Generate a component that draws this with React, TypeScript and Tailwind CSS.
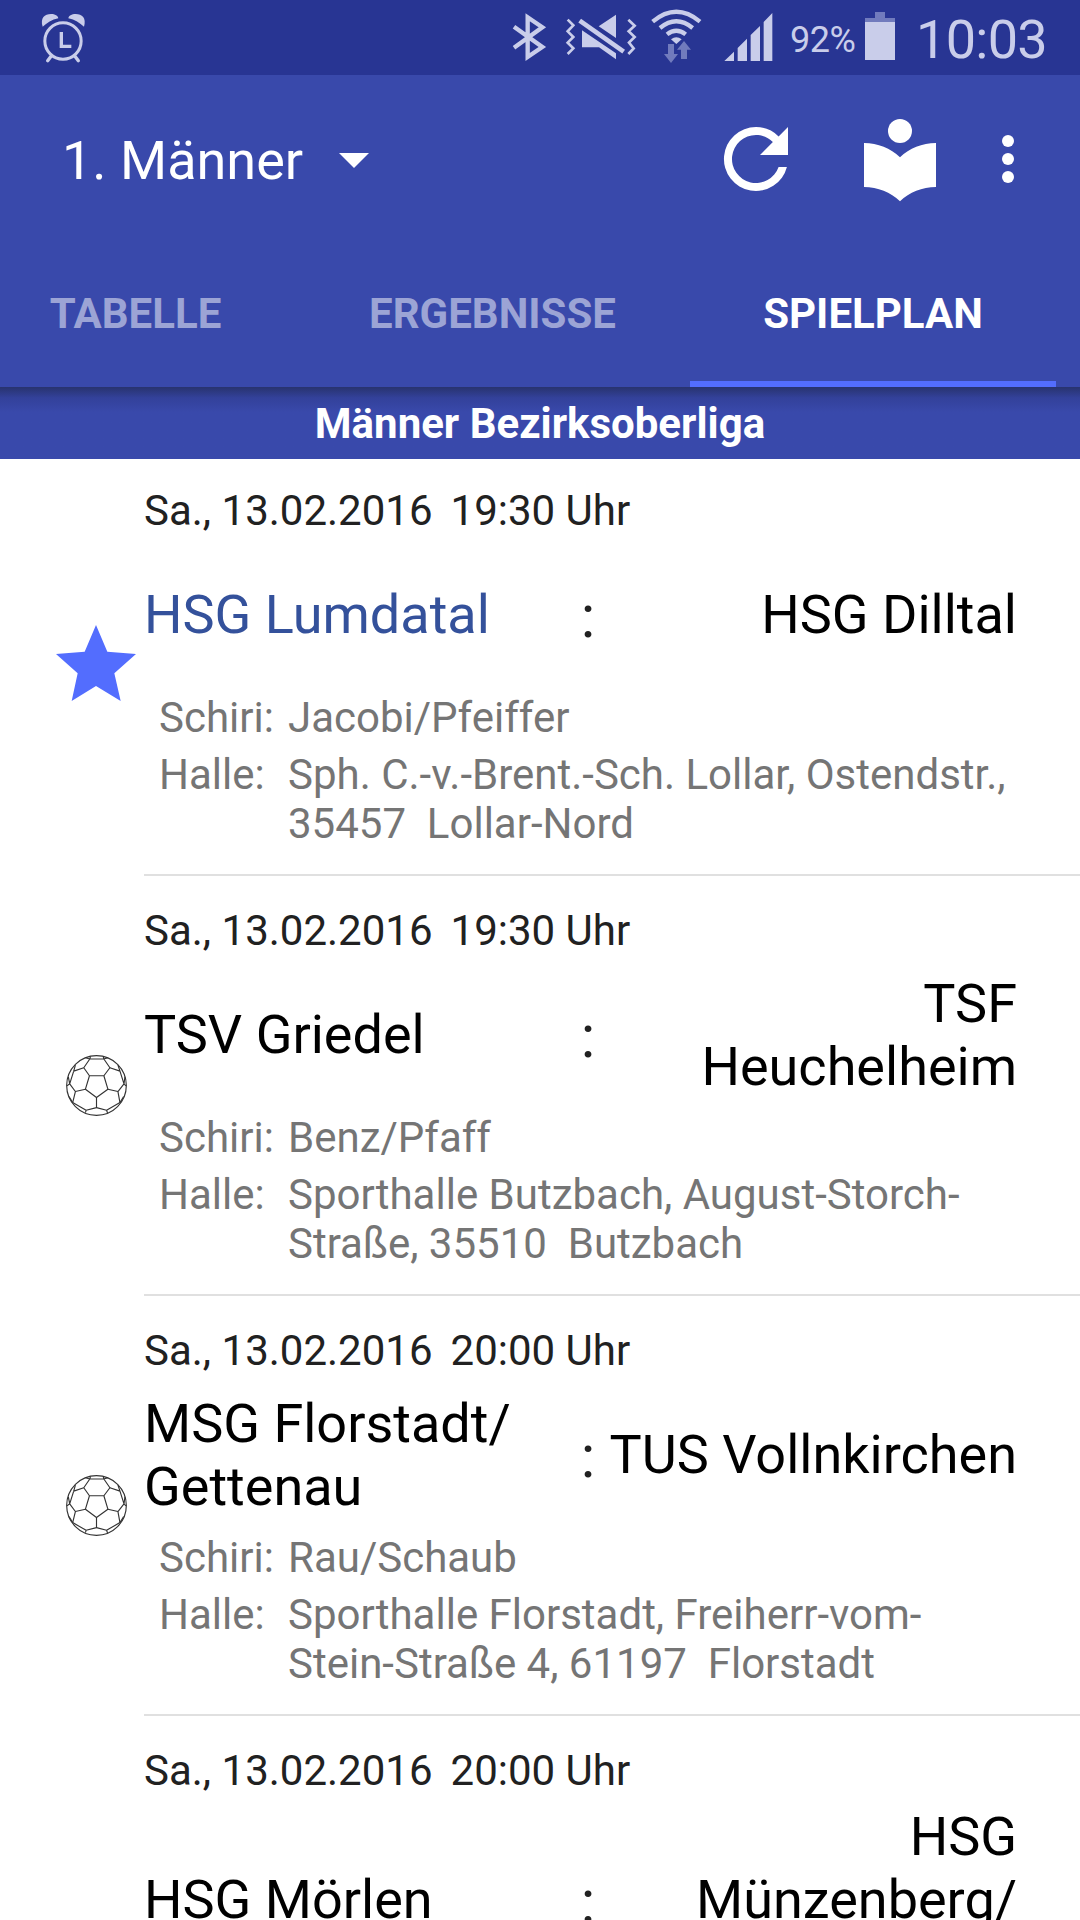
import clsx from 'clsx'

type Game = {
  date: string
  time: string
  home: string
  guest: string
  referee: string
  venue: string
  favourite?: boolean
}

const TABS = [
  { label: 'Tabelle', width: 'w-[319px]' },
  { label: 'Ergebnisse', width: 'w-[395px]' },
  { label: 'Spielplan', width: 'w-[366px]', active: true },
]

const GAMES: Game[] = [
  {
    date: 'Sa., 13.02.2016',
    time: '19:30 Uhr',
    home: 'HSG Lumdatal',
    guest: 'HSG Dilltal',
    referee: 'Jacobi/Pfeiffer',
    venue: 'Sph. C.-v.-Brent.-Sch. Lollar, Ostendstr.,\n35457  Lollar-Nord',
    favourite: true,
  },
  {
    date: 'Sa., 13.02.2016',
    time: '19:30 Uhr',
    home: 'TSV Griedel',
    guest: 'TSF\nHeuchelheim',
    referee: 'Benz/Pfaff',
    venue: 'Sporthalle Butzbach, August-Storch-\nStraße, 35510  Butzbach',
  },
  {
    date: 'Sa., 13.02.2016',
    time: '20:00 Uhr',
    home: 'MSG Florstadt/\nGettenau',
    guest: 'TUS Vollnkirchen',
    referee: 'Rau/Schaub',
    venue: 'Sporthalle Florstadt, Freiherr-vom-\nStein-Straße 4, 61197  Florstadt',
  },
  {
    date: 'Sa., 13.02.2016',
    time: '20:00 Uhr',
    home: 'HSG Mörlen',
    guest: 'HSG\nMünzenberg/\n ',
    referee: '',
    venue: ' \n \n ',
  },
]

function StatusBar() {
  return (
    <div className="flex h-[75px] items-center bg-[#283593] text-[#c9cdea]">
      <svg viewBox="60 0 141 225" className="ml-10 h-[75px] w-[47px] shrink-0" fill="none" stroke="currentColor">
        <circle cx="129" cy="123" r="54.5" strokeWidth="9" />
        <path d="M124 96v43h30" strokeWidth="10" />
        <path d="M92 170l-9 12M166 170l9 12" strokeWidth="10" strokeLinecap="round" />
        <path d="M68 80c-8-26 6-38 25-38 12 0 21 5 22 13-20 4-34 14-47 25zM192 80c8-26-6-38-25-38-12 0-21 5-22 13 20 4 34 14 47 25z" fill="currentColor" stroke="none" />
      </svg>
      <svg viewBox="30 0 120 225" className="ml-[423px] h-[75px] w-10 shrink-0" fill="none" stroke="currentColor" strokeWidth="13">
        <path d="M42 80l85 61-44 30V52l44 30-85 61" />
      </svg>
      <svg viewBox="195 0 225 225" className="ml-[15px] h-[75px] w-[75px] shrink-0">
        <path d="M246 91l102 69v18l-51-36h-51zM296 79l52-35v70z" fill="currentColor" />
        <path d="M239 62l132 93" stroke="currentColor" strokeWidth="14" />
        <path d="M203 59l17 17-17 18 17 17-17 17 17 17-17 17M385 59l19 18-18 17 18 17-17 17 14 17-16 17" fill="none" stroke="currentColor" strokeWidth="8" />
      </svg>
      <svg viewBox="450 0 159 225" className="ml-2.5 h-[75px] w-[53px] shrink-0" fill="none" stroke="currentColor" strokeWidth="13">
        <path d="M458 65Q529 6 600 65M480 84Q529 44 578 84M501 103Q529 81 557 103" />
        <path d="M513 118q16-13 32 0l-16 14z" fill="currentColor" stroke="none" />
        <path d="M504 132h18v30h12l-21 27-21-27h12zM543 177v-28h-12l21-26 21 26h-12v28z" fill="#717bbd" stroke="none" />
      </svg>
      <svg viewBox="669 0 150 225" className="ml-5 h-[75px] w-[50px] shrink-0" fill="currentColor">
        <path d="M673 183l29-28v28zM713 183v-39l28-28v67zM752 183v-78l28-27v105zM791 183V66l26-27v144z" />
      </svg>
      <span className="ml-[17px] mt-[5px] w-[75px] text-[36px] leading-none tracking-[-0.5px]">92%</span>
      <svg viewBox="0 0 30 75" className="h-[75px] w-[30px] shrink-0" fill="currentColor">
        <path d="M10 12h10v6h10v4H0v-4h10z" fill="#717bbd" />
        <path d="M0 22h30v38H0z" />
      </svg>
      <span className="ml-[21px] mt-[5px] text-[54px] leading-none tracking-[-0.7px]">10:03</span>
    </div>
  )
}

function Toolbar() {
  return (
    <div className="flex h-[168px] items-center text-white">
      <div className="flex flex-1 items-center pl-[62px]">
        <span className="mt-[2px] text-[54px] leading-[63px]">1. Männer</span>
        <svg viewBox="0 0 30 15" className="ml-[36px] mt-[3px] h-[15px] w-[30px]" fill="currentColor">
          <path d="M0 0h30L15 15z" />
        </svg>
      </div>
      <svg viewBox="0 0 24 24" className="h-24 w-24" fill="currentColor">
        <path d="M17.65 6.35A7.96 7.96 0 0 0 12 4a8 8 0 1 0 7.73 10h-2.08A6 6 0 1 1 12 6c1.66 0 3.14.69 4.22 1.78L13 11h7V4z" />
      </svg>
      <svg viewBox="0 0 24 24" className="ml-12 h-24 w-24" fill="currentColor">
        <path d="M12 11.55C9.64 9.35 6.48 8 3 8v11c3.48 0 6.64 1.35 9 3.55 2.36-2.19 5.52-3.55 9-3.55V8c-3.48 0-6.64 1.35-9 3.55z" />
        <circle cx="12" cy="5" r="3" />
      </svg>
      <svg viewBox="0 0 24 24" className="ml-6 mr-9 h-[72px] w-[72px]" fill="currentColor">
        <circle cx="12" cy="6" r="2" />
        <circle cx="12" cy="12" r="2" />
        <circle cx="12" cy="18" r="2" />
      </svg>
    </div>
  )
}

function StarIcon() {
  return (
    <svg viewBox="48 195 240 228" className="mb-1.5 h-[76px] w-20" fill="#536dfe">
      <path d="M168 195l34 80 86 7-65 58 19 83-74-45-73 45 18-83-65-58 86-7z" />
    </svg>
  )
}

function BallIcon() {
  return (
    <svg viewBox="47 43 182 182" className="mb-[2px] h-[61px] w-[61px]" fill="none" stroke="#333" strokeWidth="3.4" strokeLinejoin="round">
      <circle cx="138" cy="134" r="89" />
      <path d="M117 105h43l12 40-34 25-33-25z" />
      <path d="M117 105l-17-24 18-26h42l18 26-18 24M118 55l-13-4M160 55l12-4M118 55l2-8M160 55l-2-8" />
      <path d="M100 81l-30 10-12 38 17 23 30-7M70 91l5-18M58 129l-8 6M58 129l-4-21M75 152l-8 33 40 23 31-8v-30" />
      <path d="M178 81l30 10 12 38-18 23-30-7M208 91l-6-18M220 129l6 6M220 129l3-21M202 152l6 33-40 23-30-8" />
      <path d="M67 185l-11-18M208 185l11-18M107 208l-2 7M168 208l3 8" />
    </svg>
  )
}

function GameRow({ game }: { game: Game }) {
  return (
    <li className="flex">
      <div className="flex w-36 shrink-0 items-center justify-center pl-12">
        {game.favourite ? <StarIcon /> : <BallIcon />}
      </div>
      <div className="flex-1 border-b-2 border-[#e0e0e0] pb-[26px] pt-[30px]">
        <div className="flex gap-[18px] text-[42px] leading-[49px] text-[#212121]">
          <span>{game.date}</span>
          <span>{game.time}</span>
        </div>
        <div className="mt-[10px] flex min-h-[139px] items-center whitespace-pre pr-[63px] text-[54px] leading-[63px] text-black">
          <span className={clsx('w-[432px]', game.favourite && 'text-[#34519b]')}>{game.home}</span>
          <span className="mt-[4px] w-6 text-center text-[60px] text-[#212121]">:</span>
          <span className="flex-1 text-right">{game.guest}</span>
        </div>
        <dl className="mt-[9px] grid grid-cols-[129px_1fr] gap-y-2 whitespace-pre pl-[15px] text-[42px] leading-[49px] text-[#757575]">
          <dt>Schiri:</dt>
          <dd>{game.referee}</dd>
          <dt>Halle:</dt>
          <dd>{game.venue}</dd>
        </dl>
      </div>
    </li>
  )
}

export default function App() {
  return (
    <div className="flex h-[1920px] w-[1080px] flex-col overflow-hidden bg-white font-['Roboto',sans-serif]">
      <StatusBar />
      <header className="bg-[#3949ab]">
        <Toolbar />
        <nav className="-ml-6 flex h-36">
          {TABS.map((t) => (
            <button
              key={t.label}
              className={clsx(
                'shrink-0 border-b-[6px] pt-[2px] text-center text-[42px] font-bold uppercase leading-[49px]',
                t.width,
                t.active ? 'border-[#536dfe] text-white' : 'border-transparent text-[#9ca4d5]',
              )}
            >
              {t.label}
            </button>
          ))}
        </nav>
      </header>
      <h1 className="z-10 h-[72px] shrink-0 bg-[#3949ab] bg-linear-to-b from-[#28336f] via-[#33419a] via-15% to-[#3949ab] to-35% pt-[12px] text-center text-[42px] font-bold leading-[49px] text-white">
        Männer Bezirksoberliga
      </h1>
      <ul className="-mt-[3px] min-h-0 flex-1">
        {GAMES.map((g, i) => (
          <GameRow key={i} game={g} />
        ))}
      </ul>
    </div>
  )
}
